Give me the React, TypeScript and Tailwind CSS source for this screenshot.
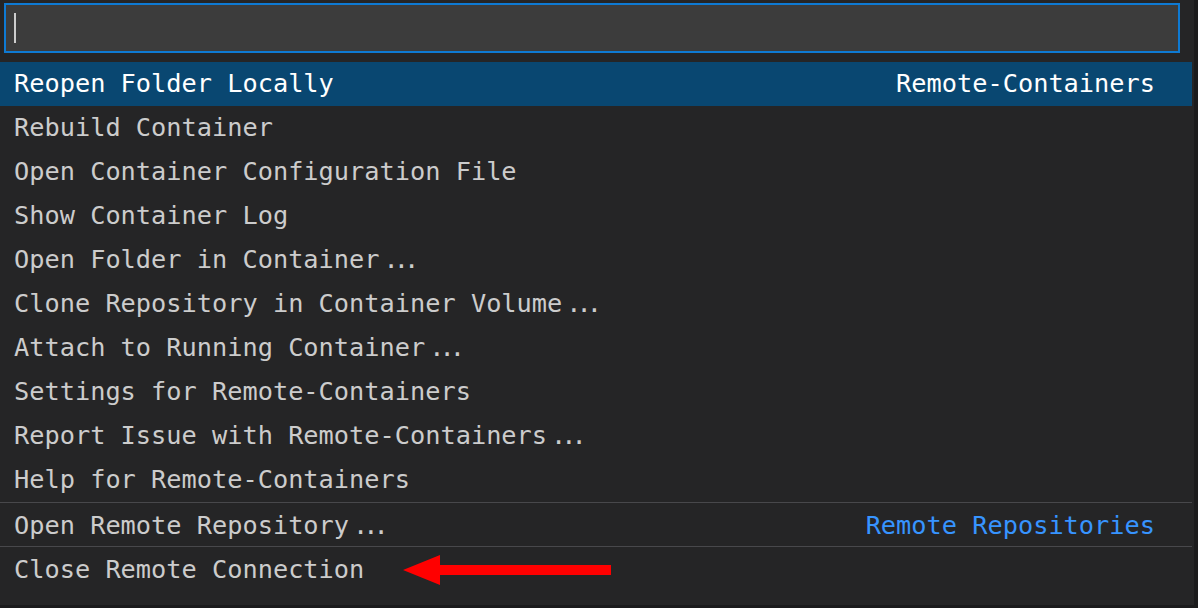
import React from "react";

type Item = { label: string; dots?: boolean; right?: string; rightBlue?: boolean; sep?: boolean; selected?: boolean; arrow?: boolean };

const items: Item[] = [
  { label: "Reopen Folder Locally", right: "Remote-Containers", selected: true },
  { label: "Rebuild Container" },
  { label: "Open Container Configuration File" },
  { label: "Show Container Log" },
  { label: "Open Folder in Container", dots: true },
  { label: "Clone Repository in Container Volume", dots: true },
  { label: "Attach to Running Container", dots: true },
  { label: "Settings for Remote-Containers" },
  { label: "Report Issue with Remote-Containers", dots: true },
  { label: "Help for Remote-Containers" },
  { label: "Open Remote Repository", dots: true, right: "Remote Repositories", rightBlue: true, sep: true },
  { label: "Close Remote Connection", sep: true, arrow: true },
];

function Arrow() {
  return (
    <svg width="208" height="30" viewBox="0 0 208 30" className="ml-[39px] shrink-0">
      <polygon points="0,15 37,0 37,10 208,10 208,20 37,20 37,30" fill="#ff0000" />
    </svg>
  );
}

export default function App() {
  return (
    <div className="w-[1198px] h-[608px] bg-[#1b1b1c] overflow-hidden" style={{ fontFamily: '"DejaVu Sans Mono", "Liberation Mono", monospace' }}>
      <div className="w-[1194px] h-[605px] bg-[#252526] flex flex-col">
        <div className="ml-[4px] mt-[3px] w-[1176px] h-[50px] border-2 border-[#0e7ad3] bg-[#3c3c3c] flex items-center pl-[8px]">
          <div className="w-[2px] h-[30px] bg-[#cccccc]" />
        </div>
        <div className="mt-[9px] w-[1192px] flex flex-col">
          {items.map((it, i) => (
            <div
              key={i}
              className={
                "h-[44px] flex items-center pl-[14px] pr-[37px] text-[25.3px] leading-none " +
                (it.selected ? "bg-[#094771] text-white " : "text-[#cccccc] ") +
                (it.sep ? "border-t-[1.5px] border-[#48484b] pt-[3px]" : "")
              }
            >
              <span className="whitespace-pre">{it.label}</span>
              {it.dots && <span className="ml-[4px] tracking-[-5px] whitespace-pre">...</span>}
              {it.arrow && <Arrow />}
              <span className="flex-1" />
              {it.right && (
                <span className={"whitespace-pre " + (it.rightBlue ? "text-[#3794ff]" : "")}>{it.right}</span>
              )}
            </div>
          ))}
        </div>
      </div>
    </div>
  );
}
